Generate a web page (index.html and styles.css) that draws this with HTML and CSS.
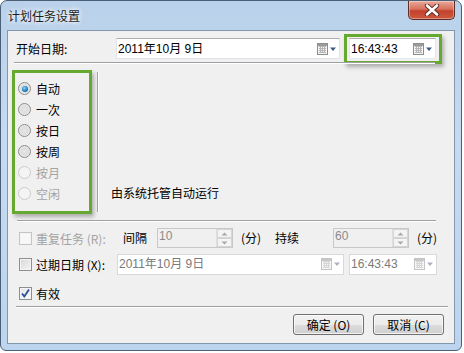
FILE: index.html
```html
<!DOCTYPE html>
<html>
<head>
<meta charset="utf-8">
<link rel="stylesheet" href="styles.css">
</head>
<body>
<div class="window">
  <div class="titlebar">
    <span class="title">计划任务设置</span>
    <span class="close"><svg width="16" height="12" viewBox="0 0 16 12"><path d="M3 1.5 L13 10.5 M13 1.5 L3 10.5" stroke="#5a2a22" stroke-width="4.4" stroke-linecap="round"/><path d="M3 1.5 L13 10.5 M13 1.5 L3 10.5" stroke="#fff" stroke-width="2.6" stroke-linecap="round"/></svg></span>
  </div>
  <div class="client">
    <div class="row1">
      <span class="lbl-start">开始日期:</span>
      <div class="box date-box">
        <span class="val">2011年10月 9日</span>
        <span class="cal"><svg width="20" height="12" viewBox="0 0 20 12"><rect x="0.5" y="0.5" width="10" height="11" fill="#f4f4f4" stroke="#8d8d8d"/><path d="M2 3.5h7M2 5.5h7M2 7.5h7M2 9.5h7M3.5 3v7M5.5 3v7M7.5 3v7" stroke="#b5b5b5" stroke-width="1"/><rect x="1" y="1" width="9" height="2" fill="#9c9c9c"/><path d="M13 4.5 L19 4.5 L16 8 Z" fill="#3c5a8a"/></svg></span>
      </div>
      <div class="hl-time">
        <div class="box time-box">
          <span class="val">16:43:43</span>
          <span class="cal"><svg width="20" height="12" viewBox="0 0 20 12"><rect x="0.5" y="0.5" width="10" height="11" fill="#f4f4f4" stroke="#8d8d8d"/><path d="M2 3.5h7M2 5.5h7M2 7.5h7M2 9.5h7M3.5 3v7M5.5 3v7M7.5 3v7" stroke="#b5b5b5" stroke-width="1"/><rect x="1" y="1" width="9" height="2" fill="#9c9c9c"/><path d="M13 4.5 L19 4.5 L16 8 Z" fill="#3c5a8a"/></svg></span>
        </div>
      </div>
    </div>
    <div class="sep sep-top"></div>
    <div class="mode-area">
      <div class="hl-radios">
        <div class="radio-row"><span class="radio on"></span><span>自动</span></div>
        <div class="radio-row"><span class="radio"></span><span>一次</span></div>
        <div class="radio-row"><span class="radio"></span><span>按日</span></div>
        <div class="radio-row"><span class="radio"></span><span>按周</span></div>
        <div class="radio-row dis"><span class="radio"></span><span>按月</span></div>
        <div class="radio-row dis"><span class="radio"></span><span>空闲</span></div>
      </div>
      <div class="vline"></div>
      <div class="desc">由系统托管自动运行</div>
    </div>
    <div class="sep sep-mid"></div>
    <div class="row repeat-row">
      <span class="check dis-check"></span>
      <span class="lbl dis">重复任务 (R):</span>
      <span class="txt t-interval">间隔</span>
      <div class="spin">
        <span class="val">10</span>
        <span class="spin-btns"><span class="sb"><svg width="7" height="4" viewBox="0 0 7 4"><path d="M0.5 3.5 L3.5 0.5 L6.5 3.5Z" fill="#a8a8a8"/></svg></span><span class="sb"><svg width="7" height="4" viewBox="0 0 7 4"><path d="M0.5 0.5 L3.5 3.5 L6.5 0.5Z" fill="#a8a8a8"/></svg></span></span>
      </div>
      <span class="txt t-unit">(分)</span>
      <span class="txt t-dur">持续</span>
      <div class="spin">
        <span class="val">60</span>
        <span class="spin-btns"><span class="sb"><svg width="7" height="4" viewBox="0 0 7 4"><path d="M0.5 3.5 L3.5 0.5 L6.5 3.5Z" fill="#a8a8a8"/></svg></span><span class="sb"><svg width="7" height="4" viewBox="0 0 7 4"><path d="M0.5 0.5 L3.5 3.5 L6.5 0.5Z" fill="#a8a8a8"/></svg></span></span>
      </div>
      <span class="txt t-unit2">(分)</span>
    </div>
    <div class="row expire-row">
      <span class="check"></span>
      <span class="lbl">过期日期 (X):</span>
      <div class="box dis-box date2">
        <span class="val">2011年10月 9日</span>
        <span class="cal"><svg width="20" height="12" viewBox="0 0 20 12"><rect x="0.5" y="0.5" width="10" height="11" fill="#f7f7f7" stroke="#c4c4c4"/><path d="M2 3.5h7M2 5.5h7M2 7.5h7M2 9.5h7M3.5 3v7M5.5 3v7M7.5 3v7" stroke="#d6d6d6" stroke-width="1"/><rect x="1" y="1" width="9" height="2" fill="#c8c8c8"/><path d="M13 4.5 L19 4.5 L16 8 Z" fill="#a9b3c3"/></svg></span>
      </div>
      <div class="box dis-box time2">
        <span class="val">16:43:43</span>
        <span class="cal"><svg width="20" height="12" viewBox="0 0 20 12"><rect x="0.5" y="0.5" width="10" height="11" fill="#f7f7f7" stroke="#c4c4c4"/><path d="M2 3.5h7M2 5.5h7M2 7.5h7M2 9.5h7M3.5 3v7M5.5 3v7M7.5 3v7" stroke="#d6d6d6" stroke-width="1"/><rect x="1" y="1" width="9" height="2" fill="#c8c8c8"/><path d="M13 4.5 L19 4.5 L16 8 Z" fill="#a9b3c3"/></svg></span>
      </div>
    </div>
    <div class="row valid-row">
      <span class="check checked"><svg width="11" height="11" viewBox="0 0 11 11"><path d="M2 5.5 L4.3 8.5 L9 1.5" fill="none" stroke="#2a4f9a" stroke-width="1.8"/></svg></span>
      <span class="lbl">有效</span>
    </div>
    <div class="sep sep-bottom"></div>
    <div class="buttons">
      <span class="btn">确定 (O)</span>
      <span class="btn">取消 (C)</span>
    </div>
  </div>
</div>
</body>
</html>
```

FILE: styles.css
```css
html, body {
  margin: 0;
  padding: 0;
  background: #ffffff;
}
body {
  font-family: "Noto Sans CJK SC", "Liberation Sans", sans-serif;
  font-size: 12px;
  color: #000;
}
.window {
  box-sizing: border-box;
  width: 462px;
  height: 351px;
  border: 1px solid #4b5f76;
  border-radius: 7px 7px 6px 6px;
  background: linear-gradient(180deg, #b9d1ea 0%, #c6dbf1 40%, #bcd4ee 100%);
  padding: 0 6px 6px 6px;
  display: flex;
  flex-direction: column;
}
.titlebar {
  height: 29px;
  display: flex;
  justify-content: space-between;
  align-items: flex-start;
}
.title {
  margin-top: 7px;
  margin-left: 1px;
  font-size: 12px;
  line-height: 16px;
  color: #1e1e1e;
  text-shadow: 0 0 6px #fff, 0 0 4px #fff;
}
.close {
  width: 47px;
  height: 19px;
  margin-right: 0;
  box-sizing: border-box;
  border: 1px solid #5d2e28;
  border-top: none;
  border-radius: 0 0 5px 5px;
  background: linear-gradient(180deg, #e9a99b 0%, #d7705c 45%, #c2412e 55%, #cd5a3e 100%);
  box-shadow: inset 0 0 0 1px rgba(255,255,255,0.35);
  display: flex;
  align-items: center;
  justify-content: center;
}
.client {
  flex: 1;
  box-sizing: border-box;
  border: 1px solid #8397ad;
  background: #f0f0f0;
  display: flex;
  flex-direction: column;
}
.box {
  box-sizing: border-box;
  height: 21px;
  background: #fff;
  border: 1px solid #e3e9ef;
  border-top-color: #abadb3;
  display: flex;
  align-items: center;
  justify-content: space-between;
  font-family: "Liberation Sans", "Noto Sans CJK SC", sans-serif;
  font-size: 12px;
}
.box .val {
  padding-left: 1px;
  line-height: 14px;
}
.cal {
  display: flex;
  margin-right: 2px;
}
.row1 {
  margin-top: 3px;
  height: 29px;
  display: flex;
  align-items: center;
  padding-left: 8px;
}
.lbl-start {
  width: 100px;
}
.date-box {
  width: 224px;
  border-color: #e2e3ea;
  border-top-color: #abadb3;
}
.hl-time {
  box-sizing: border-box;
  margin-left: 4px;
  width: 98px;
  height: 30px;
  border: 3px solid #66a930;
  box-shadow: 2px 3px 4px rgba(0,0,0,0.28);
  padding: 0 0 0 2px;
  display: flex;
  align-items: center;
}
.time-box {
  width: 87px;
}
.sep {
  height: 1px;
  border-top: 1px solid #a0a0a0;
  border-bottom: 1px solid #fff;
  height: 0;
}
.sep-top {
  margin: -1px 19px 0 6px;
}
.mode-area {
  margin-top: 6px;
  height: 144px;
  display: flex;
}
.hl-radios {
  box-sizing: border-box;
  margin-left: 4px;
  width: 80px;
  height: 144px;
  border: 3px solid #66a930;
  box-shadow: 2px 3px 4px rgba(0,0,0,0.28);
  padding: 5px 0 0 3px;
}
.radio-row {
  height: 21px;
  display: flex;
  align-items: center;
  gap: 5px;
}
.radio {
  box-sizing: border-box;
  width: 13px;
  height: 13px;
  border-radius: 50%;
  border: 1px solid #8b8b8b;
  background: radial-gradient(circle at 50% 50%, #e8e8e8 0%, #dcdcdc 40%, #f6f6f6 100%);
  display: flex;
  align-items: center;
  justify-content: center;
}
.radio.on::after {
  content: "";
  width: 6px;
  height: 6px;
  border-radius: 50%;
  background: radial-gradient(circle at 40% 35%, #8ad3f7 0%, #1d7fc4 55%, #0f4f8f 100%);
}
.radio-row.dis {
  color: #a3a3a3;
}
.radio-row.dis .radio {
  border-color: #cccccc;
  background: #f4f4f4;
}
.vline {
  margin-left: 5px;
  margin-top: 2px;
  width: 1px;
  height: 140px;
  background: #a0a0a0;
  border-right: 1px solid #fff;
}
.desc {
  align-self: flex-end;
  margin-left: 12px;
  margin-bottom: 13px;
  line-height: 16px;
}
.sep-mid {
  margin: 6px 18px 0 9px;
}
.row {
  display: flex;
  align-items: center;
  height: 20px;
  padding-left: 11px;
}
.repeat-row {
  margin-top: 6px;
}
.expire-row {
  margin-top: 6px;
}
.valid-row {
  margin-top: 9px;
}
.check {
  box-sizing: border-box;
  width: 13px;
  height: 13px;
  border: 1px solid #8e8f8f;
  background: linear-gradient(135deg, #d7d7d7 0%, #f5f5f5 100%);
  box-shadow: inset 0 0 0 1px #f4f4f4;
  display: flex;
  align-items: center;
  justify-content: center;
}
.check.dis-check {
  border-color: #c4c4c4;
  background: #f7f7f7;
}
.check.checked {
  background: linear-gradient(135deg, #e4e4e4 0%, #fbfbfb 100%);
}
.lbl {
  margin-left: 4px;
  width: 81px;
}
.lbl.dis {
  color: #a3a3a3;
}
.txt {
  line-height: 16px;
}
.t-interval {
  margin-left: 6px;
  width: 34px;
}
.spin {
  box-sizing: border-box;
  width: 76px;
  height: 20px;
  border: 1px solid #c8c8c8;
  background: #f0f0f0;
  display: flex;
  justify-content: space-between;
  color: #8a8a8a;
  font-family: "Liberation Sans", sans-serif;
  font-size: 12px;
}
.spin .val {
  padding-left: 1px;
  line-height: 14px;
}
.spin-btns {
  width: 15px;
  display: flex;
  flex-direction: column;
  border-left: 1px solid #e0e0e0;
}
.sb {
  flex: 1;
  display: flex;
  align-items: center;
  justify-content: center;
  background: #f4f4f4;
  border: 1px solid #d5d5d5;
}
.t-unit {
  margin-left: 8px;
  width: 34px;
}
.t-dur {
  width: 58px;
}
.t-unit2 {
  margin-left: 8px;
}
.dis-box {
  background: #fff;
  border: 1px solid #d9d9d9;
  color: #7a7a7a;
}
.date2 {
  width: 227px;
}
.time2 {
  margin-left: 5px;
  width: 88px;
}
.sep-bottom {
  margin: 3px 6px 0 8px;
}
.buttons {
  margin-top: 6px;
  display: flex;
  justify-content: flex-end;
  gap: 9px;
  padding-right: 10px;
}
.btn {
  box-sizing: border-box;
  width: 71px;
  height: 21px;
  border: 1px solid #707070;
  border-radius: 3px;
  background: linear-gradient(180deg, #f2f2f2 0%, #ebebeb 50%, #dddddd 51%, #cfcfcf 100%);
  box-shadow: inset 0 0 0 1px rgba(255,255,255,0.7);
  display: flex;
  align-items: center;
  justify-content: center;
  line-height: 14px;
}
```
